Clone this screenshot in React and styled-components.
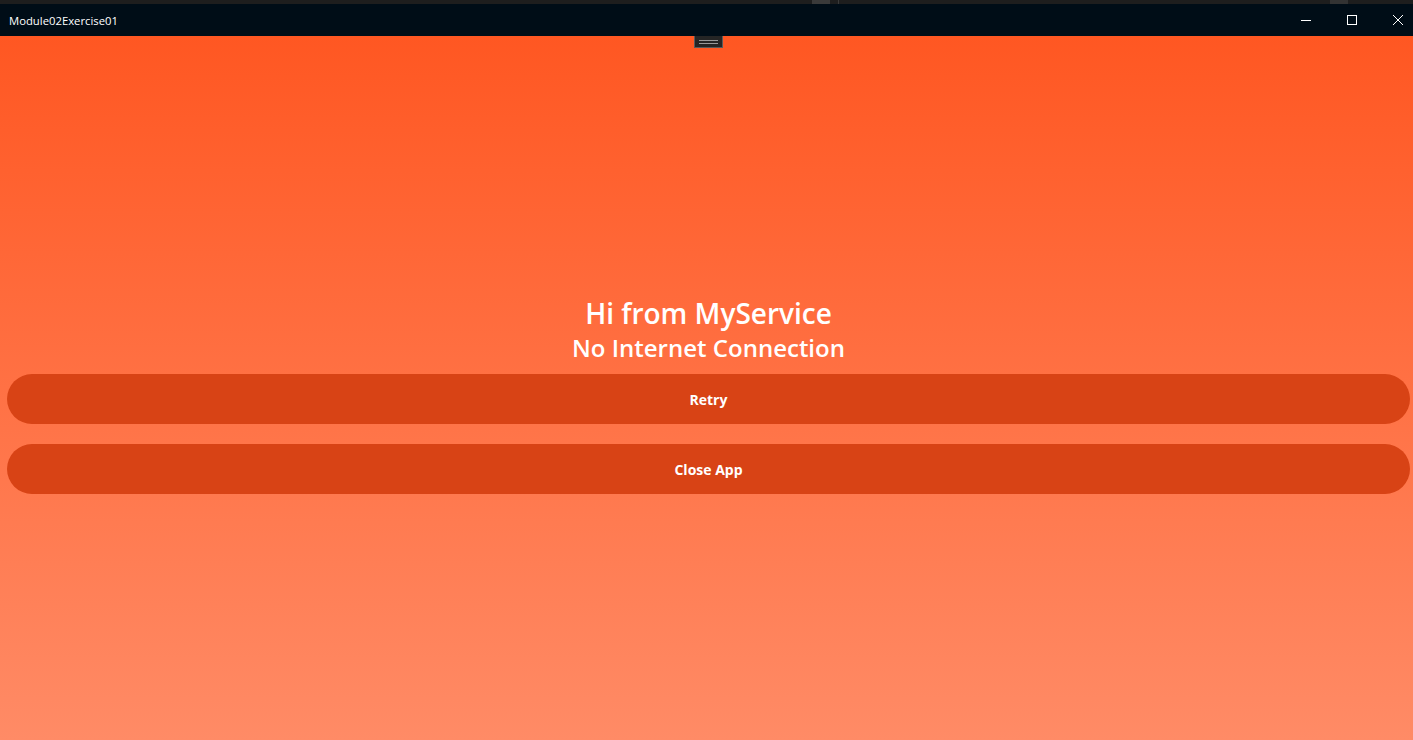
import React from "react";
import styled, { createGlobalStyle } from "styled-components";

const GlobalStyle = createGlobalStyle`
  html, body {
    margin: 0;
    padding: 0;
    height: 100%;
    overflow: hidden;
  }
  body {
    font-family: "Open Sans", "Noto Sans", sans-serif;
  }
  #root {
    height: 100%;
  }
`;

const Window = styled.div`
  width: 1413px;
  height: 740px;
  display: flex;
  flex-direction: column;
  background: #000d17;
  overflow: hidden;
`;

const TopStrip = styled.div`
  height: 4px;
  background: #1e1e1e;
  display: flex;
  flex-shrink: 0;
`;

const StripBlock = styled.div`
  width: ${({ w }) => w}px;
  margin-left: ${({ at }) => at}px;
  background: ${({ tone }) => tone};
`;

const TitleBar = styled.div`
  height: 32px;
  display: flex;
  align-items: center;
  flex-shrink: 0;
  background: #000d17;
  color: #ffffff;
`;

const Title = styled.span`
  flex: 1;
  padding-left: 9px;
  font-size: 11.3px;
  line-height: 16px;
  padding-top: 1px;
`;

const Controls = styled.div`
  display: flex;
  height: 100%;
  margin-right: -8px;
`;

const ControlButton = styled.div`
  width: 46px;
  height: 100%;
  display: flex;
  align-items: center;
  justify-content: center;

  svg {
    width: 10px;
    height: 10px;
    stroke: #ffffff;
    stroke-width: 1;
    fill: none;
  }
`;

const Content = styled.main`
  flex: 1;
  position: relative;
  background: linear-gradient(180deg, #ff5722 0%, #ff8b66 100%);
  display: flex;
  flex-direction: column;
  justify-content: center;
  padding: 12px 3px 0 7px;
`;

const Grabber = styled.div`
  position: absolute;
  top: 0;
  left: 694px;
  width: 27px;
  height: 11px;
  background: #252525;
  border: 1px solid #5a5a5a;
  border-top: none;
  display: flex;
  flex-direction: column;
  justify-content: center;
  align-items: center;
  gap: 2px;
`;

const GrabLine = styled.div`
  width: 19px;
  height: 1px;
  background: #9a9a9a;
`;

const Heading = styled.h1`
  margin: 0;
  text-align: center;
  color: #ffffff;
  font-weight: 600;
  font-size: ${({ size }) => size}px;
  line-height: ${({ lh }) => lh}px;
`;

const ButtonList = styled.div`
  display: flex;
  flex-direction: column;
  gap: 20px;
  margin-top: 10px;
`;

const Button = styled.button`
  height: 50px;
  border: none;
  border-radius: 25px;
  background: #d84315;
  color: #ffffff;
  font-family: "Open Sans", "Noto Sans", sans-serif;
  font-weight: 700;
  font-size: 14px;
  cursor: pointer;
`;

const App = () => {
  return (
    <>
      <GlobalStyle />
      <Window>
        <TopStrip>
          <StripBlock at={812} w={18} tone="#3a3a3a" />
          <StripBlock at={8} w={1} tone="#3a3a3a" />
          <StripBlock at={491} w={18} tone="#333333" />
        </TopStrip>
        <TitleBar>
          <Title>Module02Exercise01</Title>
          <Controls>
            <ControlButton>
              <svg viewBox="0 0 10 10">
                <path d="M0 5.5h10" />
              </svg>
            </ControlButton>
            <ControlButton>
              <svg viewBox="0 0 10 10">
                <rect x="0.5" y="0.5" width="9" height="9" />
              </svg>
            </ControlButton>
            <ControlButton>
              <svg viewBox="0 0 10 10">
                <path d="M0 0L10 10M10 0L0 10" />
              </svg>
            </ControlButton>
          </Controls>
        </TitleBar>
        <Content>
          <Grabber>
            <GrabLine />
            <GrabLine />
          </Grabber>
          <Heading size={28} lh={38}>Hi from MyService</Heading>
          <Heading size={24} lh={32}>No Internet Connection</Heading>
          <ButtonList>
            <Button>Retry</Button>
            <Button>Close App</Button>
          </ButtonList>
        </Content>
      </Window>
    </>
  );
};

export default App;
